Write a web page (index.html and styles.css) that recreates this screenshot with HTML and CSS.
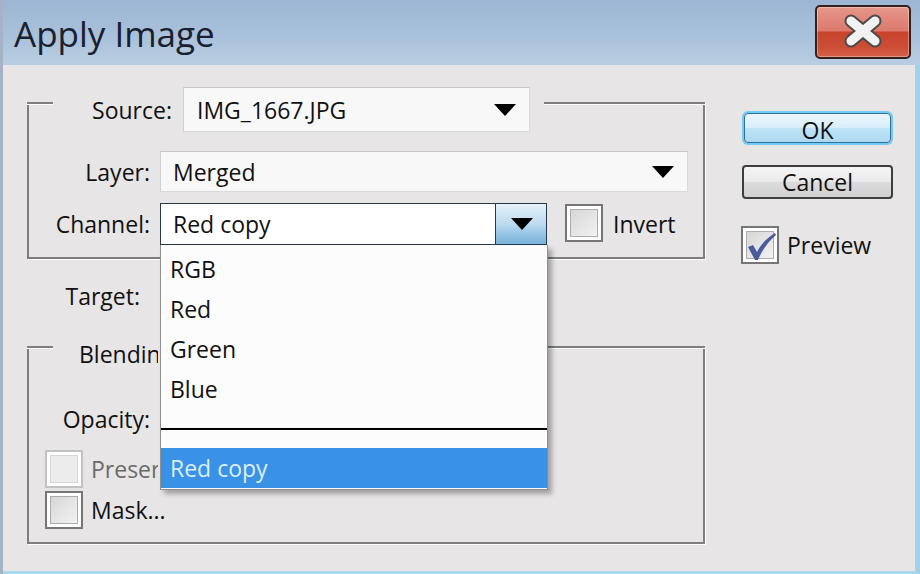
FILE: index.html
```html
<!DOCTYPE html>
<html>
<head>
	<meta http-equiv="Content-Type" content="text/html; charset=UTF-8">
	<title>Apply Image</title>
	<link rel="stylesheet" href="styles.css">
</head>
<body>
<div class="window">
	<div class="titlebar">
		<h1>Apply Image</h1>
		<button class="close" title="Close">
			<svg width="92" height="50" viewBox="0 0 92 50">
				<path d="M34 14 L58 34 M58 14 L34 34" stroke="#4a4a4a" stroke-width="13" stroke-linecap="round"/>
				<path d="M34 14 L58 34 M58 14 L34 34" stroke="#f2f2f2" stroke-width="9" stroke-linecap="round"/>
			</svg>
		</button>
	</div>
	<div class="content">
		<div class="main">
			<div class="group">
				<div class="group-head">
					<span class="edge"></span>
					<div class="legend">
						<label>Source:</label>
						<div class="select source">IMG_1667.JPG <span class="arrow"></span></div>
					</div>
					<span class="edge fill"></span>
				</div>
				<div class="row layer">
					<label class="lbl">Layer:</label>
					<div class="select wide">Merged <span class="arrow"></span></div>
				</div>
				<div class="row channel">
					<label class="lbl">Channel:</label>
					<div class="select open">Red copy <span class="drop-btn"><span class="arrow"></span></span></div>
					<span class="check"><i></i></span>
					<span class="check-text">Invert</span>
				</div>
			</div>

			<div class="row target">
				<label class="lbl">Target:</label>
			</div>

			<div class="group">
				<div class="group-head">
					<span class="edge"></span>
					<div class="legend cut">
						<label>Blending:</label>
						<div class="select source"></div>
					</div>
					<span class="edge fill"></span>
				</div>
				<div class="row opacity">
					<label class="lbl">Opacity:</label>
				</div>
				<div class="row checkrow first">
					<span class="check disabled"><i></i></span>
					<span class="check-text disabled clip">Preserve Transparency</span>
				</div>
				<div class="row checkrow">
					<span class="check"><i></i></span>
					<span class="check-text">Mask...</span>
				</div>
			</div>

			<ul class="menu">
				<li>RGB</li>
				<li>Red</li>
				<li>Green</li>
				<li>Blue</li>
				<li class="sep"></li>
				<li class="selected">Red copy</li>
			</ul>
		</div>

		<div class="side">
			<button class="btn ok">OK</button>
			<button class="btn cancel">Cancel</button>
			<div class="row preview">
				<span class="check checked"><i>
					<svg width="30" height="30" viewBox="0 0 30 30">
						<path d="M2 15 L7 13 L11 20 C15 12 21 6 29 1 L30 3 C22 10 16 18 12 28 L9 28 Z" fill="#4a5b9c"/>
					</svg>
				</i></span>
				<span class="check-text">Preview</span>
			</div>
		</div>
	</div>
</div>
</body>
</html>
```

FILE: styles.css
```css
body {
	margin: 0;
	font-family: "Open Sans", "Noto Sans", sans-serif;
	font-size: 23px;
	color: #111;
	background: #e7e5e5;
}
.window {
	width: 920px;
	height: 574px;
	box-sizing: border-box;
	display: flex;
	flex-direction: column;
	border-left: 3px solid #a4b4c5;
	position: relative;
	overflow: hidden;
}
.titlebar {
	height: 65px;
	flex: none;
	display: flex;
	justify-content: space-between;
	padding: 0 9px 0 11px;
	background: linear-gradient(#9cb6d3, #aac2db 60%, #bacee2);
}
.titlebar h1 {
	margin: 0;
	font-weight: normal;
	font-size: 35px;
	line-height: 65px;
	padding-top: 1px;
	color: #1a2030;
}
.close {
	margin-top: 5px;
	width: 96px;
	height: 54px;
	padding: 0;
	border: 2px solid #35211c;
	border-radius: 5px;
	background: linear-gradient(#e6968b, #dc7a6d 48%, #c7432c 50%, #cc4d36 80%, #d6624b);
	box-shadow: inset 0 0 0 1px rgba(255,255,255,.35);
	display: flex;
	align-items: center;
	justify-content: center;
}
.content {
	flex: 1;
	display: flex;
	padding-left: 24px;
	border-right: 5px solid #9fd3ea;
	border-bottom: 3px solid #a9d7ec;
}
.main {
	width: 678px;
	padding-top: 37px;
	position: relative;
}
.side {
	width: 151px;
	margin-left: 37px;
	padding-top: 46px;
}

/* group boxes */
.group {
	display: flex;
	flex-direction: column;
	border: 2px solid #7e7e7e;
	border-top: none;
	box-shadow: 1px 1px 0 #fff;
	padding-bottom: 12px;
}
.group-head {
	display: flex;
	height: 45px;
	margin: -15px -2px 0;
}
.edge {
	width: 26px;
	height: 2px;
	margin-top: 15px;
	background: #7e7e7e;
	box-shadow: 0 1px 0 #fff;
}
.edge.fill {
	flex: 1;
}
.legend {
	display: flex;
	align-items: center;
	gap: 11px;
	padding-right: 14px;
}
.legend label {
	width: 119px;
	text-align: right;
}
.legend.cut {
	gap: 25px;
}
.legend.cut label {
	width: 79px;
	padding-left: 26px;
	text-align: left;
	white-space: nowrap;
	overflow: hidden;
}
.legend.cut .select {
	background: none;
	border-color: transparent;
}

.row {
	display: flex;
	align-items: center;
	gap: 10px;
	height: 41px;
}
.lbl {
	width: 121px;
	flex: none;
	text-align: right;
}
.layer {
	margin-top: 19px;
}
.channel {
	margin-top: 11px;
	height: 42px;
}
.target {
	margin-top: 16px;
	margin-bottom: 30px;
}
.target .lbl {
	width: 113px;
}
.opacity {
	margin-top: 22px;
}
.checkrow {
	height: 38px;
	padding-left: 16px;
	gap: 8px;
	margin-top: 3px;
}
.checkrow.first {
	margin-top: 11px;
}
.group .checkrow:last-child {
	margin-bottom: 1px;
}

/* dropdowns */
.select {
	box-sizing: border-box;
	height: 100%;
	display: flex;
	align-items: center;
	justify-content: space-between;
	padding-left: 12px;
	background: #f8f8f8;
	border: 1px solid #dadada;
	border-top-color: #c6c6c6;
	border-left-color: #cfcfcf;
}
.select.source {
	width: 347px;
	padding-left: 13px;
}
.select.wide {
	width: 528px;
}
.select.open {
	width: 387px;
	background: #fff;
	border-color: #24384b;
}
.arrow {
	width: 0;
	height: 0;
	border-left: 11px solid transparent;
	border-right: 11px solid transparent;
	border-top: 12px solid #000;
	margin-right: 13px;
}
.drop-btn {
	align-self: stretch;
	width: 50px;
	border-left: 1px solid #24384b;
	background: linear-gradient(#e6f2fa, #bcdaf0 50%, #8fc0e2 80%, #7cb3da);
	display: flex;
	align-items: center;
	justify-content: center;
}
.drop-btn .arrow {
	margin: 0 0 0 2px;
}

/* checkboxes */
.check {
	width: 38px;
	height: 38px;
	box-sizing: border-box;
	flex: none;
	border: 2px solid #767676;
	padding: 3px;
	background: #fff;
}
.check i {
	display: block;
	height: 100%;
	box-sizing: border-box;
	border: 1px solid #acacac;
	background: linear-gradient(135deg, #d7d7d7, #f2f2f2);
	position: relative;
}
.check.disabled {
	border-color: #c2c2c2;
}
.check.disabled i {
	border-color: #d6d6d6;
	background: #ececec;
}
.check.checked svg {
	position: absolute;
	left: -1px;
	top: 0;
}
.channel .check {
	margin-left: 8px;
	margin-top: -3px;
}
.check-text.disabled {
	color: #6b6b6b;
}
.check-text.clip {
	width: 67px;
	white-space: nowrap;
	overflow: hidden;
}

/* popup list */
.menu {
	position: absolute;
	left: 133px;
	top: 180px;
	width: 388px;
	box-sizing: border-box;
	margin: 0;
	padding: 4px 0 1px;
	list-style: none;
	background: #fcfcfc;
	border: 1px solid #8f8f8f;
	border-top: none;
	box-shadow: 4px 4px 5px rgba(0,0,0,.3);
}
.menu li {
	height: 40px;
	line-height: 40px;
	padding-left: 9px;
}
.menu li.sep {
	height: 2px;
	margin: 19px 0 18px;
	background: #000;
}
.menu li.selected {
	background: #3a92e6;
	color: #dcedfb;
}

/* buttons */
.btn {
	display: block;
	box-sizing: border-box;
	font-family: inherit;
	font-size: 23px;
	color: #111;
	border-radius: 4px;
	padding: 0;
}
.ok {
	width: 147px;
	height: 30px;
	margin: 2px;
	border: 1px solid #2f6f9f;
	box-shadow: 0 0 0 2px #72cbf1;
	background: linear-gradient(#eaf6fd, #d9effb 48%, #bfe4f7 50%, #add9f1);
}
.cancel {
	width: 151px;
	height: 34px;
	margin-top: 22px;
	border: 2px solid #3e3e3e;
	background: linear-gradient(#f4f4f4, #ebebeb 48%, #dcdcdc 50%, #d0d0d0);
	line-height: 28px;
}
.preview {
	margin-top: 27px;
	margin-left: -1px;
	height: 38px;
	gap: 8px;
}
```
